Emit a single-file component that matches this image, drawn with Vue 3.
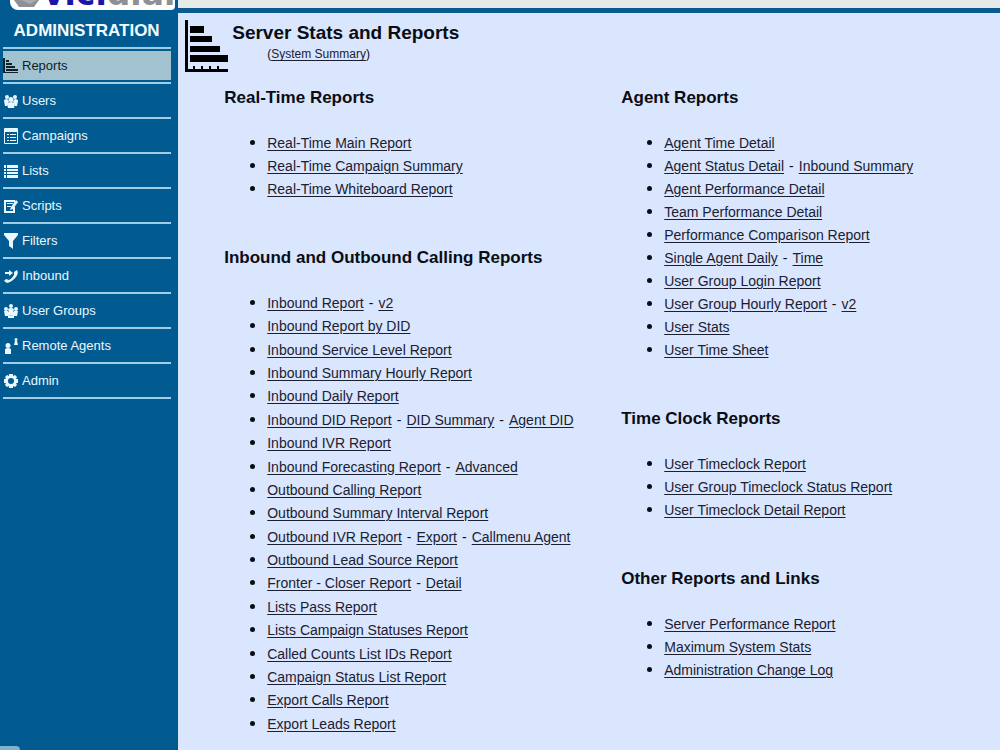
<template>
  <div class="layout">
    <aside class="sidebar">
      <div class="logo">
        <svg class="logo-mark" viewBox="0 0 30 10" width="30" height="10">
          <path d="M2 0H27L22 7H7Z" fill="#8d9196" />
          <path d="M9 0H25L18 4Z" fill="#a9adb1" />
        </svg>
        <span class="logo-text"><span class="logo-vici">vici</span>dial</span>
      </div>
      <h1 class="sidebar-title">ADMINISTRATION</h1>
      <nav class="menu">
        <a
          v-for="item in menu"
          :key="item.label"
          href="#"
          class="menu-item"
          :class="{ active: item.label === current }"
          @click.prevent="current = item.label"
        >
          <svg class="menu-icon" viewBox="0 0 16 16" width="16" height="16" fill="currentColor">
            <path v-for="(d, i) in item.paths" :key="i" :d="d" fill-rule="evenodd" />
          </svg>
          <span>{{ item.label }}</span>
        </a>
      </nav>
      <div class="status-tab"></div>
    </aside>

    <div class="main">
      <div class="topbar"></div>
      <main class="content">
        <header class="page-head">
          <svg class="page-icon" viewBox="0 0 44 53" width="44" height="53">
            <path d="M0 0H3V49H43V52H0Z" />
            <path d="M5 6H19V13H5ZM5 16H27V22H5ZM5 26H35V32H5ZM5 35H43V42H5Z" />
            <path d="M8 46H10V50H8ZM16 46H18V50H16ZM24 46H26V50H24ZM32 46H34V50H32Z" />
          </svg>
          <div class="page-heading">
            <h2 class="page-title">Server Stats and Reports</h2>
            <p class="page-sub">(<a href="#">System Summary</a>)</p>
          </div>
        </header>

        <div class="columns">
          <div v-for="(column, c) in columns" :key="c" class="column">
            <section v-for="group in column" :key="group.title" class="group" :class="{ long: group.rows.length > 12 }">
              <h3 class="group-title">{{ group.title }}</h3>
              <ul class="report-list">
                <li v-for="row in group.rows" :key="row[0]">
                  <template v-for="(link, i) in row" :key="link">
                    <span v-if="i > 0" class="sep">-</span>
                    <a href="#">{{ link }}</a>
                  </template>
                </li>
              </ul>
            </section>
          </div>
        </div>
      </main>
    </div>
  </div>
</template>

<script setup>
import { ref } from 'vue'

const current = ref('Reports')

const menu = [
  { label: 'Reports', paths: ['M0 0H2V14H15V15H0Z', 'M3 2H6V4H3ZM3 5H9V7H3ZM3 8H12V10H3ZM3 11H15V13H3Z'] },
  {
    label: 'Users',
    paths: [
      'M4 2a2 2 0 1 1 0 4a2 2 0 1 1 0-4ZM12 2a2 2 0 1 1 0 4a2 2 0 1 1 0-4Z',
      'M1 8Q1 6 4 6L6 8L4 13H2ZM15 8Q15 6 12 6L10 8L12 13H14Z',
      'M8 4a2 2 0 1 1 0 5a2 2 0 1 1 0-5ZM4 11Q5 9 8 9Q11 9 12 11L11 15H5Z'
    ]
  },
  {
    label: 'Campaigns',
    paths: [
      'M2 0H14Q15 0 15 1V15Q15 16 14 16H2Q1 16 1 15V1Q1 0 2 0ZM2 4V15H14V4Z',
      'M4 6H6V7H4ZM7 6H13V7H7ZM4 9H6V10H4ZM7 9H13V10H7ZM4 12H6V13H4ZM7 12H13V13H7Z'
    ]
  },
  { label: 'Lists', paths: ['M1 2H3V5H1ZM4 2H15V5H4ZM1 6H3V8H1ZM4 6H15V8H4ZM1 9H3V11H1ZM4 9H15V11H4ZM1 12H3V15H1ZM4 12H15V15H4Z'] },
  {
    label: 'Scripts',
    paths: ['M1 2H12V4H3V13H10V10L12 8V15H1Z', 'M4 5H10V6H4ZM4 8H8V9H4Z', 'M13 2L15 4L10 11L7 12L8 9Z']
  },
  { label: 'Filters', paths: ['M1 0H15V2L10 8V16L6 13V8L1 2Z'] },
  {
    label: 'Inbound',
    paths: [
      'M14 2Q16 5 13 9Q9 14 4 15L1 13L3 11L6 12Q9 11 11 7L11 4Z',
      'M2 4H6V2L10 5L6 8V6H2Z'
    ]
  },
  {
    label: 'User Groups',
    paths: [
      'M8 1a2 2 0 1 1 0 4a2 2 0 1 1 0-4ZM3 4a2 2 0 1 1 0 4a2 2 0 1 1 0-4ZM13 4a2 2 0 1 1 0 4a2 2 0 1 1 0-4Z',
      'M5 6Q8 4 11 6L10 10H6ZM1 8H5L6 13H2ZM11 8H15L14 13H10Z',
      'M8 9a2 2 0 1 1 0 3a2 2 0 1 1 0-3ZM5 13Q8 11 11 13V15H5Z'
    ]
  },
  {
    label: 'Remote Agents',
    paths: ['M5 5a2 2 0 1 1 0 5a2 2 0 1 1 0-5ZM2 11Q5 9 8 11V16H2Z', 'M13 0a1 1 0 1 1 0 3a1 1 0 1 1 0-3ZM12 3H14L15 7H11Z']
  },
  {
    label: 'Admin',
    paths: [
      'M6 1H10L10 3L12 2L14 4L13 6L15 6V10L13 10L14 12L12 14L10 13V15H6V13L4 14L2 12L3 10L1 10V6L3 6L2 4L4 2L6 3ZM8 5a3 3 0 1 0 0 6a3 3 0 1 0 0-6Z'
    ]
  }
]

// each row holds the links that share one line
const columns = [
  [
    {
      title: 'Real-Time Reports',
      rows: [['Real-Time Main Report'], ['Real-Time Campaign Summary'], ['Real-Time Whiteboard Report']]
    },
    {
      title: 'Inbound and Outbound Calling Reports',
      rows: [
        ['Inbound Report', 'v2'],
        ['Inbound Report by DID'],
        ['Inbound Service Level Report'],
        ['Inbound Summary Hourly Report'],
        ['Inbound Daily Report'],
        ['Inbound DID Report', 'DID Summary', 'Agent DID'],
        ['Inbound IVR Report'],
        ['Inbound Forecasting Report', 'Advanced'],
        ['Outbound Calling Report'],
        ['Outbound Summary Interval Report'],
        ['Outbound IVR Report', 'Export', 'Callmenu Agent'],
        ['Outbound Lead Source Report'],
        ['Fronter - Closer Report', 'Detail'],
        ['Lists Pass Report'],
        ['Lists Campaign Statuses Report'],
        ['Called Counts List IDs Report'],
        ['Campaign Status List Report'],
        ['Export Calls Report'],
        ['Export Leads Report']
      ]
    }
  ],
  [
    {
      title: 'Agent Reports',
      rows: [
        ['Agent Time Detail'],
        ['Agent Status Detail', 'Inbound Summary'],
        ['Agent Performance Detail'],
        ['Team Performance Detail'],
        ['Performance Comparison Report'],
        ['Single Agent Daily', 'Time'],
        ['User Group Login Report'],
        ['User Group Hourly Report', 'v2'],
        ['User Stats'],
        ['User Time Sheet']
      ]
    },
    {
      title: 'Time Clock Reports',
      rows: [['User Timeclock Report'], ['User Group Timeclock Status Report'], ['User Timeclock Detail Report']]
    },
    {
      title: 'Other Reports and Links',
      rows: [['Server Performance Report'], ['Maximum System Stats'], ['Administration Change Log']]
    }
  ]
]
</script>

<style>
body {
  margin: 0;
  background: #d9e6fe;
}
</style>

<style scoped>
.layout {
  display: flex;
  min-height: 100vh;
  font-family: 'Liberation Sans', Arial, sans-serif;
  font-size: 14px;
  color: #0b0d14;
}

.sidebar {
  flex: 0 0 178px;
  box-sizing: border-box;
  display: flex;
  flex-direction: column;
  background: #015b91;
  border-right: 1px solid #0d5180;
}

.logo {
  display: flex;
  align-items: flex-end;
  height: 10px;
  margin: 0 2px 0 10px;
  overflow: hidden;
  background: #fff;
  border-radius: 0 0 4px 8px;
}

.logo-mark {
  flex: none;
  margin: 0 1px 0 2px;
}

.logo-text {
  font-family: 'DejaVu Sans', sans-serif;
  font-size: 33px;
  font-weight: 700;
  line-height: 32px;
  color: #8d9196;
}

.logo-vici {
  color: #1a14a8;
}

.sidebar-title {
  margin: 0 4px 0 0;
  padding: 9px 0 4px;
  font-size: 17px;
  line-height: 24px;
  font-weight: 700;
  text-align: center;
  color: #f2fbff;
}

.menu {
  margin: 0 6px 0 3px;
  border-top: 2px solid #9fcde6;
}

.menu-item {
  display: flex;
  align-items: center;
  gap: 3px;
  height: 33px;
  border-bottom: 2px solid #9fcde6;
  font-size: 13px;
  line-height: 16px;
  color: #eaf7ff;
  text-decoration: none;
}

/* the highlight leaves a thin blue strip above and below */
.menu-item.active {
  color: #10202c;
  background: linear-gradient(#a3c2cf, #a3c2cf) center / 100% 29px no-repeat;
}

.menu-icon {
  flex: none;
}

.status-tab {
  width: 20px;
  height: 4px;
  margin-top: auto;
  background: #7fb3cc;
  border-radius: 0 4px 0 0;
}

.main {
  flex: 1;
  min-width: 0;
  display: flex;
  flex-direction: column;
}

.topbar {
  height: 8px;
  background: #e6eae9;
  border-bottom: 5px solid #0b5a90;
}

.content {
  flex: 1;
  display: flex;
  flex-direction: column;
  padding: 7px 7px 15px;
  background: #d9e6fe;
}

.page-head {
  display: flex;
  gap: 3px;
}

.page-icon {
  flex: none;
}

.page-title {
  margin: 0;
  font-size: 19px;
  line-height: 25px;
}

.page-sub {
  margin: 0;
  padding-left: 35px;
  font-size: 12px;
  line-height: 18px;
}

.columns {
  flex: 1;
  display: grid;
  grid-template-columns: 397px 1fr;
  padding: 13px 0 0 39px;
}

.column {
  display: flex;
  flex-direction: column;
  gap: 46px;
}

/* the long list spreads over the rest of its column */
.group.long {
  flex: 1;
  display: flex;
  flex-direction: column;
}

.group.long .report-list {
  flex: 1;
  grid-auto-rows: 1fr;
}

.group-title {
  margin: 0 0 22px;
  font-size: 17px;
  line-height: 24px;
}

.report-list {
  display: grid;
  row-gap: 1px;
  margin: 0;
  padding-left: 43px;
}

.report-list li {
  line-height: 22px;
  white-space: nowrap;
}

.report-list li::marker {
  font-size: 17px;
}

.sep {
  margin: 0 5px;
}

a {
  color: #1b2030;
  text-underline-offset: 2px;
}
</style>
